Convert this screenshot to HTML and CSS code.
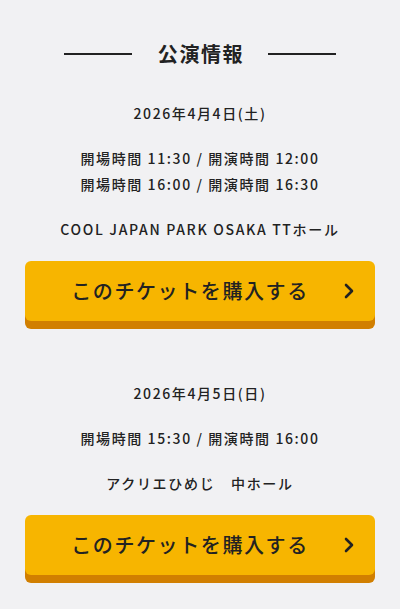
FILE: index.html
```html
<!DOCTYPE html>
<html lang="ja">
<head>
    <meta charset="UTF-8">
    <meta name="viewport" content="width=device-width, initial-scale=1.0">
    <title>公演情報</title>
    <link rel="stylesheet" href="styles.css">
</head>
<body>

<section class="info">
    <h2 class="info-title"><span>公演情報</span></h2>

    <div class="show">
        <p class="show-date">2026年4月4日(土)</p>
        <p class="show-time">開場時間 11:30 / 開演時間 12:00<br>開場時間 16:00 / 開演時間 16:30</p>
        <p class="show-venue">COOL JAPAN PARK OSAKA TTホール</p>
        <a href="#" class="ticket-button">
            このチケットを購入する
            <svg class="chevron" width="10" height="16" viewBox="0 0 10 16"><path d="M2 2 L8 8 L2 14" fill="none" stroke="#222" stroke-width="2.6" stroke-linejoin="round" stroke-linecap="round"/></svg>
        </a>
    </div>

    <div class="show">
        <p class="show-date">2026年4月5日(日)</p>
        <p class="show-time">開場時間 15:30 / 開演時間 16:00</p>
        <p class="show-venue">アクリエひめじ　中ホール</p>
        <a href="#" class="ticket-button">
            このチケットを購入する
            <svg class="chevron" width="10" height="16" viewBox="0 0 10 16"><path d="M2 2 L8 8 L2 14" fill="none" stroke="#222" stroke-width="2.6" stroke-linejoin="round" stroke-linecap="round"/></svg>
        </a>
    </div>
</section>

</body>
</html>
```

FILE: styles.css
```css
body {
    margin: 0;
    padding: 39px 25px 40px;
    background-color: #f1f1f3;
    color: #222;
    font-family: "Noto Sans CJK JP", "Noto Sans", sans-serif;
    font-weight: 500;
    letter-spacing: 0.1em;
}

p {
    margin: 0;
}

.info-title {
    display: flex;
    align-items: center;
    justify-content: center;
    gap: 26px;
    margin: 0;
    font-size: 20px;
    font-weight: 700;
    line-height: 30px;
}

.info-title span {
    margin-right: -2px;
}

.info-title::before,
.info-title::after {
    content: "";
    width: 68px;
    height: 2px;
    background-color: #222;
}

.show {
    text-align: center;
    font-size: 14px;
    line-height: 26px;
}

.show:first-of-type {
    margin-top: 31px;
}

.show + .show {
    margin-top: 59px;
}

.show-time,
.show-venue {
    margin-top: 19px;
}

.show-venue {
    letter-spacing: 0.12em;
}

.ticket-button {
    position: relative;
    display: block;
    margin-top: 19px;
    height: 60px;
    line-height: 60px;
    padding: 0 40px 0 20px;
    background-color: #f7b500;
    border-radius: 6px;
    box-shadow: 0 8px 0 #d17f00;
    color: #222;
    font-size: 20px;
    text-decoration: none;
    text-align: center;
}

.chevron {
    position: absolute;
    right: 21px;
    top: 22px;
}
```
